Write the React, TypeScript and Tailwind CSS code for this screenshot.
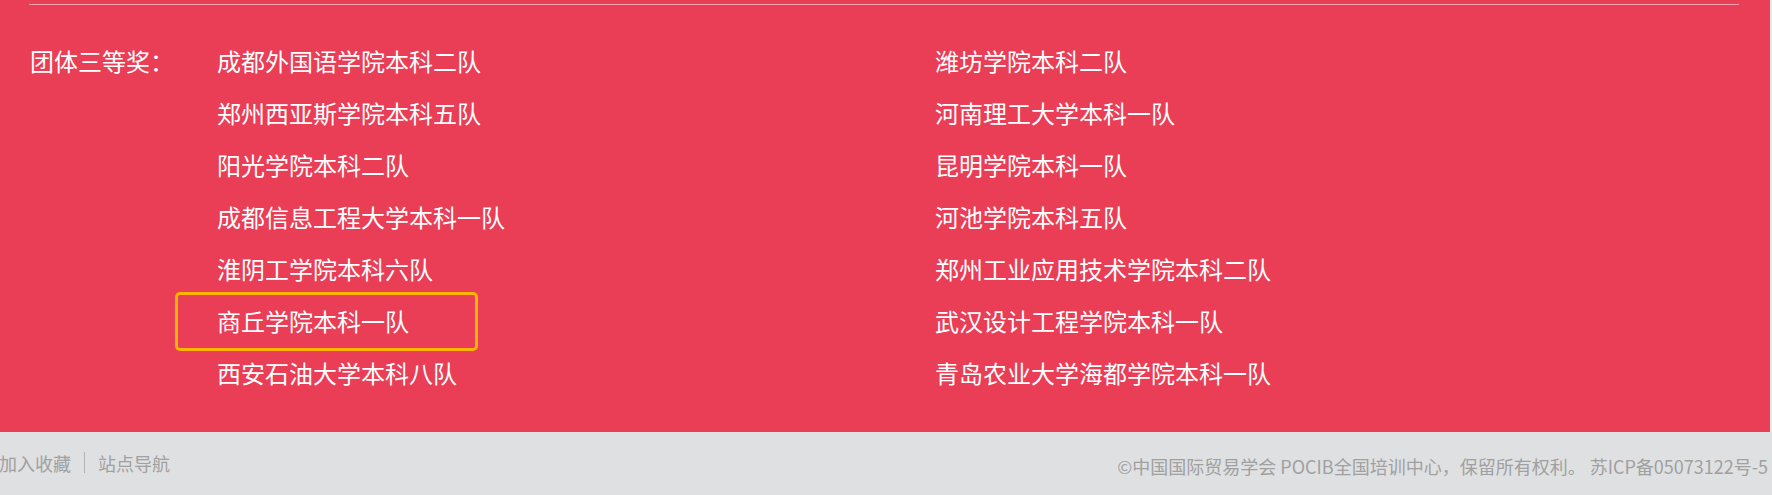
const leftTeams = [
  '成都外国语学院本科二队',
  '郑州西亚斯学院本科五队',
  '阳光学院本科二队',
  '成都信息工程大学本科一队',
  '淮阴工学院本科六队',
  '商丘学院本科一队',
  '西安石油大学本科八队',
]

const rightTeams = [
  '潍坊学院本科二队',
  '河南理工大学本科一队',
  '昆明学院本科一队',
  '河池学院本科五队',
  '郑州工业应用技术学院本科二队',
  '武汉设计工程学院本科一队',
  '青岛农业大学海都学院本科一队',
]

const font = { fontFamily: '"Microsoft YaHei", "Noto Sans CJK SC", "Noto Sans", sans-serif' }

function TeamCell({ name, active }: { name: string; active?: boolean }) {
  return (
    <li className="h-[52px] flex items-center">
      <span
        className={`flex items-center min-w-[297px] h-[53px] pl-[39px] pr-[4px] whitespace-nowrap rounded-[2px] ${
          active ? 'outline-[3px] outline-solid outline-[#fbb400]' : ''
        }`}
      >
        {name}
      </span>
    </li>
  )
}

export default function App() {
  return (
    <div className="w-[1772px] h-[495px] bg-[#e6e6e6] overflow-hidden" style={font}>
      {/* 获奖名单 */}
      <div className="w-[1770px] h-[432px] bg-[#ea3d56] text-white pt-[4px]">
        <div className="ml-[29px] w-[1710px] h-px bg-[#f3a3ad]" />
        <div className="flex mt-[30px]">
          <div className="w-[178px] pl-[30px] h-[52px] flex items-center text-[24px] leading-none shrink-0 whitespace-nowrap">
            团体三等奖：
          </div>
          <div className="grid grid-cols-[718px_718px] text-[24px] leading-none">
            <ul>
              {leftTeams.map((t, i) => (
                <TeamCell key={t} name={t} active={i === 5} />
              ))}
            </ul>
            <ul>
              {rightTeams.map((t) => (
                <TeamCell key={t} name={t} />
              ))}
            </ul>
          </div>
        </div>
      </div>

      {/* 底部 */}
      <div className="h-[63px] bg-[#dfe0e2] flex items-center justify-between text-[#a0a0a0]">
        <div className="flex items-center text-[18px] leading-none -ml-[1px] -mt-[2px] whitespace-nowrap">
          <span>加入收藏</span>
          <span className="mx-[13px] w-px h-[21px] bg-[#b4b4b4]" />
          <span>站点导航</span>
        </div>
        <div className="text-[18px] leading-none pr-[4px] mt-[4px] whitespace-nowrap">
          ©中国国际贸易学会 POCIB全国培训中心，保留所有权利。 苏ICP备05073122号-5
        </div>
      </div>
    </div>
  )
}
